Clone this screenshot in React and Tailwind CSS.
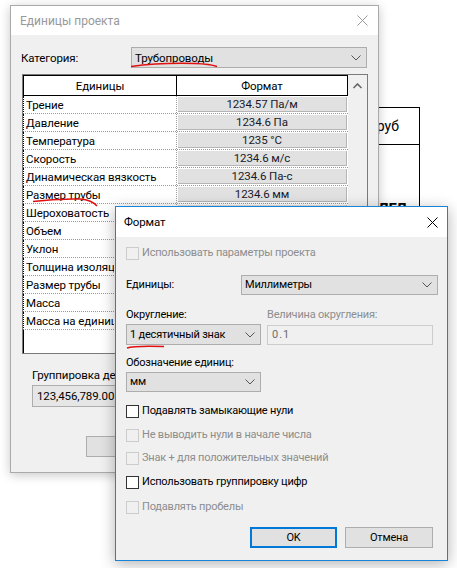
import React from "react";

const Chevron = ({ color = "#555" }) => (
  <svg width="10" height="6" viewBox="0 0 10 6" className="shrink-0">
    <path d="M0.5 0.5 L5 5 L9.5 0.5" fill="none" stroke={color} strokeWidth="1" />
  </svg>
);

const CloseX = ({ color }) => (
  <svg width="11" height="11" viewBox="0 0 11 11">
    <path d="M0.5 0.5 L10.5 10.5 M10.5 0.5 L0.5 10.5" fill="none" stroke={color} strokeWidth="1" />
  </svg>
);

const Check = ({ enabled, label }) => (
  <div className="flex items-center h-[16px]">
    <div
      className={
        "w-[13px] h-[13px] border shrink-0 " +
        (enabled ? "border-[#333333] bg-white" : "border-[#cccccc] bg-[#f0f0f0]")
      }
    />
    <span className={"ml-[3px] whitespace-nowrap " + (enabled ? "text-black" : "text-[#8d8d8d]")}>{label}</span>
  </div>
);

const rows = [
  ["Трение", "1234.57 Па/м"],
  ["Давление", "1234.6 Па"],
  ["Температура", "1235 °C"],
  ["Скорость", "1234.6 м/с"],
  ["Динамическая вязкость", "1234.6 Па-с"],
  ["Размер трубы", "1234.6 мм"],
  ["Шероховатость", ""],
  ["Объем", ""],
  ["Уклон", ""],
  ["Толщина изоляции трубы", ""],
  ["Размер трубы", ""],
  ["Масса", ""],
  ["Масса на единицу длины", ""],
];

export default function App() {
  return (
    <div className="relative w-[457px] h-[568px] bg-white overflow-hidden text-[11.5px] leading-[16px] tracking-[-0.1px] text-black font-['Roboto',sans-serif]">
      {/* background drawing */}
      <div className="absolute left-[360px] top-[107px] w-[60px] h-[160px] border-t border-r border-black" />
      <div className="absolute left-[360px] top-[144px] w-[60px] border-t border-black" />
      <div className="absolute left-[370px] top-[117px] text-[14px] leading-[18px] tracking-normal">труб</div>
      <div className="absolute left-[378px] top-[199px] text-[15px] leading-[20px] font-bold">ЛГЛ</div>

      {/* Dialog 1 */}
      <div className="absolute left-[10px] top-[5px] w-[369px] h-[468px] border border-[#aaaaaa] bg-[#f0f0f0] shadow-[0_2px_10px_rgba(0,0,0,0.22)] flex flex-col">
        <div className="h-[29px] bg-white flex items-center justify-between pl-[9px] pr-[10px] shrink-0">
          <span className="text-[#999999] text-[12px] tracking-normal">Единицы проекта</span>
          <CloseX color="#999999" />
        </div>
        <div className="flex flex-col px-[10px]">
          <div className="flex items-center mt-[12px] h-[21px]">
            <span className="w-[110px]">Категория:</span>
            <div className="w-[236px] h-[21px] bg-[#e1e1e1] border border-[#adadad] flex items-center justify-between pl-[3px] pr-[5px]">
              <span>Трубопроводы</span>
              <Chevron />
            </div>
          </div>

          {/* table */}
          <div className="mt-[6px] ml-[1px] w-[346px] h-[280px] flex border border-[#7a7a7a] bg-white">
            <div className="w-[325px] flex flex-col">
              <div className="flex h-[21px] border-b border-black border-t border-l shrink-0">
                <div className="w-[153px] border-r border-black flex items-center justify-center">Единицы</div>
                <div className="flex-1 border-r border-black flex items-center justify-center">Формат</div>
              </div>
              {rows.map(([a, b], i) => (
                <div key={i} className="flex h-[18px] border-b border-dotted border-[#9a9a9a] shrink-0 border-l border-l-black">
                  <div className={"border-r border-dotted border-[#9a9a9a] pl-[2px] flex items-center overflow-hidden whitespace-nowrap " + (i < 6 ? "w-[153px]" : "w-[153px]")}>
                    <span className={i < 6 ? "" : "max-w-[88px] overflow-hidden"}>{a}</span>
                  </div>
                  <div className="flex-1 px-[1px] py-[1px] flex">
                    <div className="flex-1 bg-[#e1e1e1] border-r border-b border-[#b5b5b5] flex items-center justify-center whitespace-nowrap text-[#1a1a2a]">
                      {b}
                    </div>
                  </div>
                </div>
              ))}
              <div className="flex-1 flex border-l border-black">
                <div className="w-[153px] border-r border-dotted border-[#9a9a9a]" />
              </div>
            </div>
            <div className="flex-1 bg-[#f0f0f0] flex justify-center pt-[8px]">
              <svg width="9" height="6" viewBox="0 0 9 6">
                <path d="M0.5 5 L4.5 1 L8.5 5" fill="none" stroke="#606060" strokeWidth="1.5" />
              </svg>
            </div>
          </div>

          <div className="mt-[13px] ml-[11px] w-[100px] overflow-hidden whitespace-nowrap">Группировка десятичных знаков:</div>
          <div className="mt-[2px] ml-[11px] w-[200px] h-[22px] bg-[#e6e6e6] border border-[#adadad] flex items-center pl-[4px]">
            <span className="w-[80px] overflow-hidden whitespace-nowrap">123,456,789.00</span>
          </div>
          <div className="mt-[29px] ml-[65px] w-[75px] h-[21px] bg-[#e1e1e1] border border-[#adadad]" />
        </div>
      </div>

      {/* Dialog 2 */}
      <div className="absolute left-[115px] top-[206px] w-[333px] h-[355px] border border-[#1883d7] bg-[#f0f0f0] shadow-[0_3px_14px_rgba(0,0,0,0.3)] flex flex-col text-[11px] tracking-[-0.2px]">
        <div className="h-[30px] bg-white flex items-center justify-between pl-[8px] pr-[9px] shrink-0">
          <span className="text-[11.5px] tracking-[-0.1px]">Формат</span>
          <CloseX color="#000000" />
        </div>
        <div className="flex flex-col pl-[10px] pr-[9px]">
          <div className="mt-[8px]">
            <Check label="Использовать параметры проекта" />
          </div>
          <div className="mt-[14px] flex items-center h-[20px]">
            <span className="w-[115px]">Единицы:</span>
            <div className="flex-1 h-[20px] bg-[#e1e1e1] border border-[#adadad] flex items-center justify-between pl-[3px] pr-[5px]">
              <span>Миллиметры</span>
              <Chevron />
            </div>
          </div>
          <div className="mt-[12px] flex h-[16px]">
            <span className="w-[141px]">Округление:</span>
            <span className="text-[#8d8d8d]">Величина округления:</span>
          </div>
          <div className="mt-[1px] flex items-center">
            <div className="w-[135px] h-[21px] bg-[#e1e1e1] border border-[#adadad] flex items-center justify-between pl-[3px] pr-[5px]">
              <span className="whitespace-nowrap">1 десятичный знак</span>
              <Chevron />
            </div>
            <div className="ml-[6px] w-[166px] h-[20px] bg-[#f0f0f0] border border-[#cccccc] flex items-center pl-[4px] text-[#6d6d6d] tracking-[1px]">
              0.1
            </div>
          </div>
          <div className="mt-[10px] h-[16px]">Обозначение единиц:</div>
          <div className="mt-[1px] w-[135px] h-[20px] bg-[#e1e1e1] border border-[#adadad] flex items-center justify-between pl-[3px] pr-[5px]">
            <span>мм</span>
            <Chevron />
          </div>
          <div className="mt-[11px]">
            <Check enabled label="Подавлять замыкающие нули" />
          </div>
          <div className="mt-[8px]">
            <Check label="Не выводить нули в начале числа" />
          </div>
          <div className="mt-[7px]">
            <Check label="Знак + для положительных значений" />
          </div>
          <div className="mt-[8px]">
            <Check enabled label="Использовать группировку цифр" />
          </div>
          <div className="mt-[9px]">
            <Check label="Подавлять пробелы" />
          </div>
          <div className="mt-[12px] flex justify-end pr-[5px] gap-[8px]">
            <div className="w-[87px] h-[21px] bg-[#e1e1e1] border-2 border-[#0078d7] flex items-center justify-center">OK</div>
            <div className="w-[88px] h-[21px] bg-[#e1e1e1] border border-[#adadad] flex items-center justify-center">Отмена</div>
          </div>
        </div>
      </div>

      {/* red annotations */}
      <svg className="absolute left-0 top-0 pointer-events-none" width="457" height="568" viewBox="0 0 457 568">
        <path d="M131 66.5 Q 160 62.5 195 63.5 Q 210 64 217 66.5" fill="none" stroke="#e01010" strokeWidth="1.4" />
        <path d="M33 201.5 Q 55 198.5 80 199 Q 92 200 97 206" fill="none" stroke="#e01010" strokeWidth="1.4" />
        <path d="M127 348 Q 134 345.5 164 346.5" fill="none" stroke="#e01010" strokeWidth="1.4" />
      </svg>
    </div>
  );
}
